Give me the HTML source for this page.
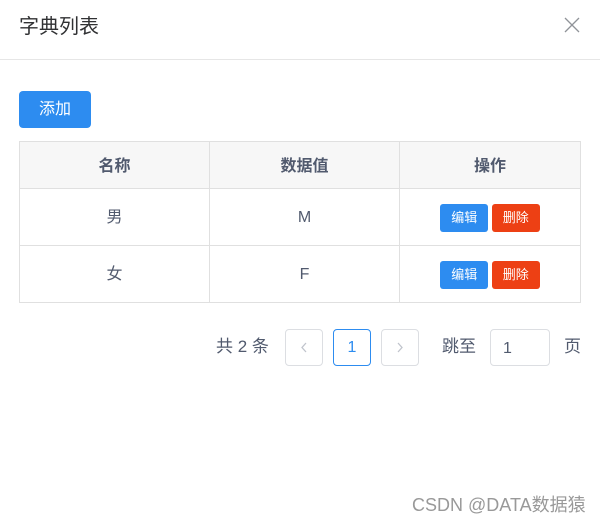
<!DOCTYPE html>
<html><head><meta charset="utf-8"><style>
*{margin:0;padding:0;box-sizing:border-box}
body{width:600px;height:523px;background:#fff;font-family:"Liberation Sans","Noto Sans CJK SC",sans-serif;position:relative;overflow:hidden;color:#606266}
.a{position:absolute}
.title{left:19px;top:14px;font-size:20px;color:#303133;line-height:26px}
.hr{left:0;top:59px;width:600px;height:1px;background:#e6e6e6}
.add{left:19px;top:91px;width:72px;height:37px;background:#2d8cf0;border-radius:4px;color:#fff;font-size:16px;line-height:37px;text-align:center}
table{position:absolute;left:19px;top:141px;width:562px;border-collapse:collapse}
td,th{border:1px solid #e0e0e0;text-align:center;font-size:16px;line-height:20px}
th{background:#f7f7f7;height:47px;color:#515a6e;font-weight:bold;padding-top:4px}
td{height:57px;color:#515a6e;padding-top:2px}
.b{display:inline-block;width:48px;height:28px;line-height:28px;color:#fff;font-size:13px;border-radius:3px;vertical-align:middle}
.pb{border:1px solid #dcdee2;border-radius:4px;width:38px;height:37px;text-align:center;line-height:35px;font-size:16px;color:#c0c4cc}
</style></head><body>
<div class="a title">字典列表</div>
<svg class="a" style="left:564px;top:17px" width="16" height="16"><path d="M1 1L15 15M15 1L1 15" stroke="#909399" stroke-width="1.3"/></svg>
<div class="a hr"></div>
<div class="a add">添加</div>
<table>
<tr><th style="width:190px">名称</th><th style="width:190px">数据值</th><th>操作</th></tr>
<tr><td>男</td><td>M</td><td><span class="b" style="background:#2d8cf0">编辑</span> <span class="b" style="background:#ed4014;margin-left:-1px">删除</span></td></tr>
<tr><td>女</td><td>F</td><td><span class="b" style="background:#2d8cf0">编辑</span> <span class="b" style="background:#ed4014;margin-left:-1px">删除</span></td></tr>
</table>
<div class="a" style="left:216px;top:336px;font-size:17px;color:#515a6e;line-height:22px">共 2 条</div>
<div class="a pb" style="left:285px;top:329px"><svg width="36" height="35"><path d="M20 13L16 17.5L20 22" stroke="#c0c4cc" stroke-width="1.3" fill="none"/></svg></div>
<div class="a pb" style="left:333px;top:329px;border-color:#2d8cf0;color:#2d8cf0">1</div>
<div class="a pb" style="left:381px;top:329px"><svg width="36" height="35"><path d="M16 13L20 17.5L16 22" stroke="#c0c4cc" stroke-width="1.3" fill="none"/></svg></div>
<div class="a" style="left:442px;top:336px;font-size:17px;color:#515a6e;line-height:22px">跳至</div>
<div class="a pb" style="left:490px;top:329px;width:60px;text-align:left;padding-left:12px;color:#515a6e;line-height:37px">1</div>
<div class="a" style="left:564px;top:336px;font-size:17px;color:#515a6e;line-height:22px">页</div>
<div class="a" style="left:412px;top:493px;font-size:18px;color:#999;line-height:24px">CSDN @DATA数据猿</div>
</body></html>
